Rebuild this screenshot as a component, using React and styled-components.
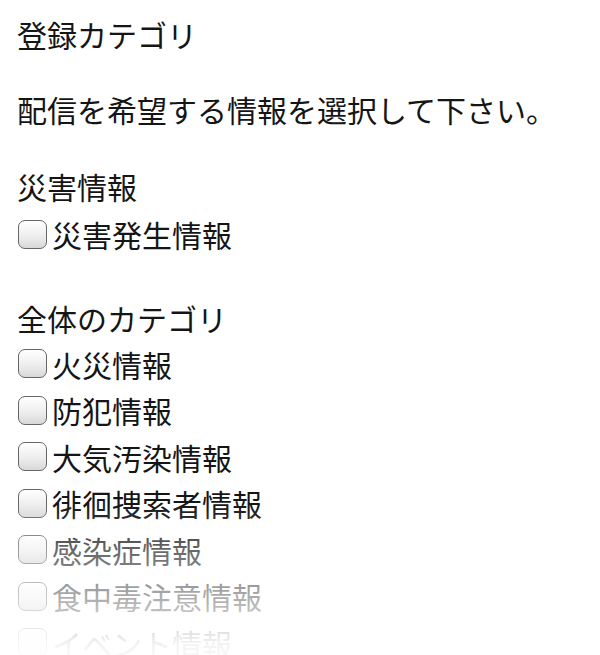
import React from "react";
import styled, { createGlobalStyle } from "styled-components";

const GlobalStyle = createGlobalStyle`
  html, body {
    margin: 0;
    padding: 0;
    background: #ffffff;
  }
  body {
    font-family: "Noto Sans CJK JP", "Noto Sans", sans-serif;
    color: #151515;
    -webkit-font-smoothing: antialiased;
  }
`;

const Page = styled.main`
  position: relative;
  height: 655px;
  overflow: hidden;
  padding: 11px 17px 0;
  box-sizing: border-box;
  font-size: 30px;
  line-height: 46px;
`;

const Title = styled.h1`
  margin: 0;
  font-size: inherit;
  font-weight: 400;
  line-height: inherit;
`;

const Lead = styled.p`
  margin: 29px 0 0;
`;

const Section = styled.section`
  margin-top: ${(p) => p.$gap}px;
`;

const SectionTitle = styled.h2`
  margin: 0 0 ${(p) => p.$after || 0}px;
  font-size: inherit;
  font-weight: 400;
  line-height: inherit;
`;

const List = styled.ul`
  list-style: none;
  margin: 0;
  padding: 0;
`;

const Row = styled.li`
  height: 46.5px;
  display: flex;
  align-items: center;
`;

const Label = styled.label`
  display: flex;
  align-items: center;
  gap: 5px;
  cursor: pointer;
`;

const Box = styled.input.attrs({ type: "checkbox" })`
  appearance: none;
  -webkit-appearance: none;
  margin: 0 0 0 1px;
  width: 29px;
  height: 29px;
  box-sizing: border-box;
  border: 1.6px solid #666666;
  border-radius: 7px;
  background: linear-gradient(#ffffff 0%, #eeeeee 55%, #d8d8d8 100%);
  flex: none;
`;

/* white wash that fades the lower end of the list */
const Fade = styled.div`
  position: absolute;
  left: 0;
  right: 0;
  bottom: 0;
  height: 150px;
  pointer-events: none;
  background: linear-gradient(
    rgba(255, 255, 255, 0) 0%,
    rgba(255, 255, 255, 0.36) 31%,
    rgba(255, 255, 255, 0.66) 63%,
    rgba(255, 255, 255, 0.94) 92%,
    rgba(255, 255, 255, 0.97) 100%
  );
`;

const disasterItems = ["災害発生情報"];
const generalItems = [
  "火災情報",
  "防犯情報",
  "大気汚染情報",
  "徘徊捜索者情報",
  "感染症情報",
  "食中毒注意情報",
  "イベント情報",
];

function CheckList({ items }) {
  return (
    <List>
      {items.map((name) => (
        <Row key={name}>
          <Label>
            <Box name={name} />
            <span>{name}</span>
          </Label>
        </Row>
      ))}
    </List>
  );
}

export default function App() {
  return (
    <>
      <GlobalStyle />
      <Page>
        <Title>登録カテゴリ</Title>
        <Lead>配信を希望する情報を選択して下さい。</Lead>
        <Section $gap={31}>
          <SectionTitle $after={2}>災害情報</SectionTitle>
          <CheckList items={disasterItems} />
        </Section>
        <Section $gap={37}>
          <SectionTitle>全体のカテゴリ</SectionTitle>
          <CheckList items={generalItems} />
        </Section>
        <Fade />
      </Page>
    </>
  );
}
